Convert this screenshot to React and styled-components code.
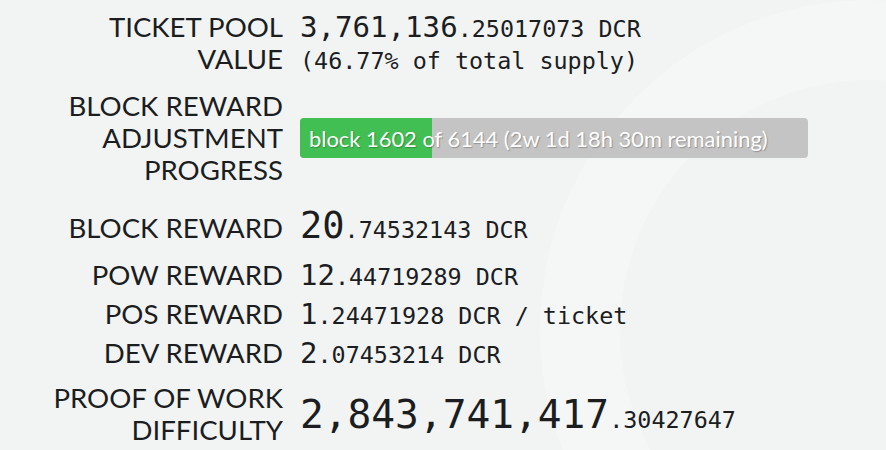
import styled, { createGlobalStyle } from 'styled-components';

const GlobalStyle = createGlobalStyle`
  html, body {
    margin: 0;
    background: #f2f4f4;
  }
  body {
    font-family: Lato, "Open Sans", sans-serif;
    color: #1c1d1f;
  }
`;

const Page = styled.div`
  position: relative;
  width: 886px;
  height: 450px;
  padding-top: 11px;
  box-sizing: border-box;
  overflow: hidden;
`;

const Watermark = styled.svg`
  position: absolute;
  left: 0;
  top: 0;
  z-index: 0;
  pointer-events: none;
`;

const Stats = styled.div`
  position: relative;
  z-index: 1;
  display: flex;
  flex-direction: column;
`;

const Row = styled.div`
  display: grid;
  grid-template-columns: 283px 1fr;
  column-gap: 17px;
  align-items: ${(p) => p.$align || 'baseline'};
  margin-top: ${(p) => p.$mt || 0}px;
`;

const Label = styled.div`
  text-align: right;
  font-family: Lato, "Open Sans", sans-serif;
  font-size: 27.6px;
  line-height: 32px;
  text-transform: uppercase;
  color: #1c1d1f;
`;

const Value = styled.div`
  font-family: "DejaVu Sans Mono", "Liberation Mono", monospace;
  font-size: 23.4px;
  line-height: ${(p) => p.$lh || '32px'};
  white-space: nowrap;
`;

const Whole = styled.span`
  font-size: ${(p) => p.$size || 29}px;
`;

const Progress = styled.div`
  position: relative;
  width: 508px;
  height: 40px;
  border-radius: 4px;
  overflow: hidden;
  background: #c4c4c4;
  display: flex;
  align-items: center;
`;

const Fill = styled.div`
  position: absolute;
  left: 0;
  top: 0;
  bottom: 0;
  background: #41bf53;
`;

const ProgressText = styled.span`
  position: relative;
  padding-left: 9px;
  font-family: Lato, "Open Sans", sans-serif;
  font-size: 21.9px;
  color: #fff;
  text-shadow: 1px 1px 1px rgba(0, 0, 0, 0.25);
  white-space: nowrap;
`;

const Amount = ({ whole, frac, size, unit }) => (
  <>
    <Whole $size={size}>{whole}</Whole>.{frac}
    {unit && ` ${unit}`}
  </>
);

export default function App() {
  const height = 1602;
  const window = 6144;

  return (
    <Page>
      <GlobalStyle />
      <Watermark width="886" height="450" viewBox="0 0 886 450">
        <circle cx="870" cy="330" r="290" fill="none" stroke="#f5f6f6" strokeWidth="80" />
      </Watermark>
      <Stats>
        <Row>
          <Label>Ticket Pool<br />Value</Label>
          <Value>
            <Amount whole="3,761,136" frac="25017073" size={29.1} unit="DCR" />
            <br />
            (46.77% of total supply)
          </Value>
        </Row>
        <Row $align="center" $mt={13}>
          <Label>Block Reward<br />Adjustment<br />Progress</Label>
          <Progress>
            <Fill style={{ width: `${(height / window) * 100}%` }} />
            <ProgressText>block {height} of {window} (2w 1d 18h 30m remaining)</ProgressText>
          </Progress>
        </Row>
        <Row $mt={24}>
          <Label>Block Reward</Label>
          <Value><Amount whole="20" frac="74532143" size={37} unit="DCR" /></Value>
        </Row>
        <Row $mt={13}>
          <Label>PoW Reward</Label>
          <Value><Amount whole="12" frac="44719289" size={29} unit="DCR" /></Value>
        </Row>
        <Row $mt={5}>
          <Label>PoS Reward</Label>
          <Value><Amount whole="1" frac="24471928" size={29} unit="DCR / ticket" /></Value>
        </Row>
        <Row $mt={5}>
          <Label>Dev Reward</Label>
          <Value><Amount whole="2" frac="07453214" size={29} unit="DCR" /></Value>
        </Row>
        <Row $align="center" $mt={11}>
          <Label>Proof of Work<br />Difficulty</Label>
          <Value $lh="normal"><Amount whole="2,843,741,417" frac="30427647" size={39.5} /></Value>
        </Row>
      </Stats>
    </Page>
  );
}
